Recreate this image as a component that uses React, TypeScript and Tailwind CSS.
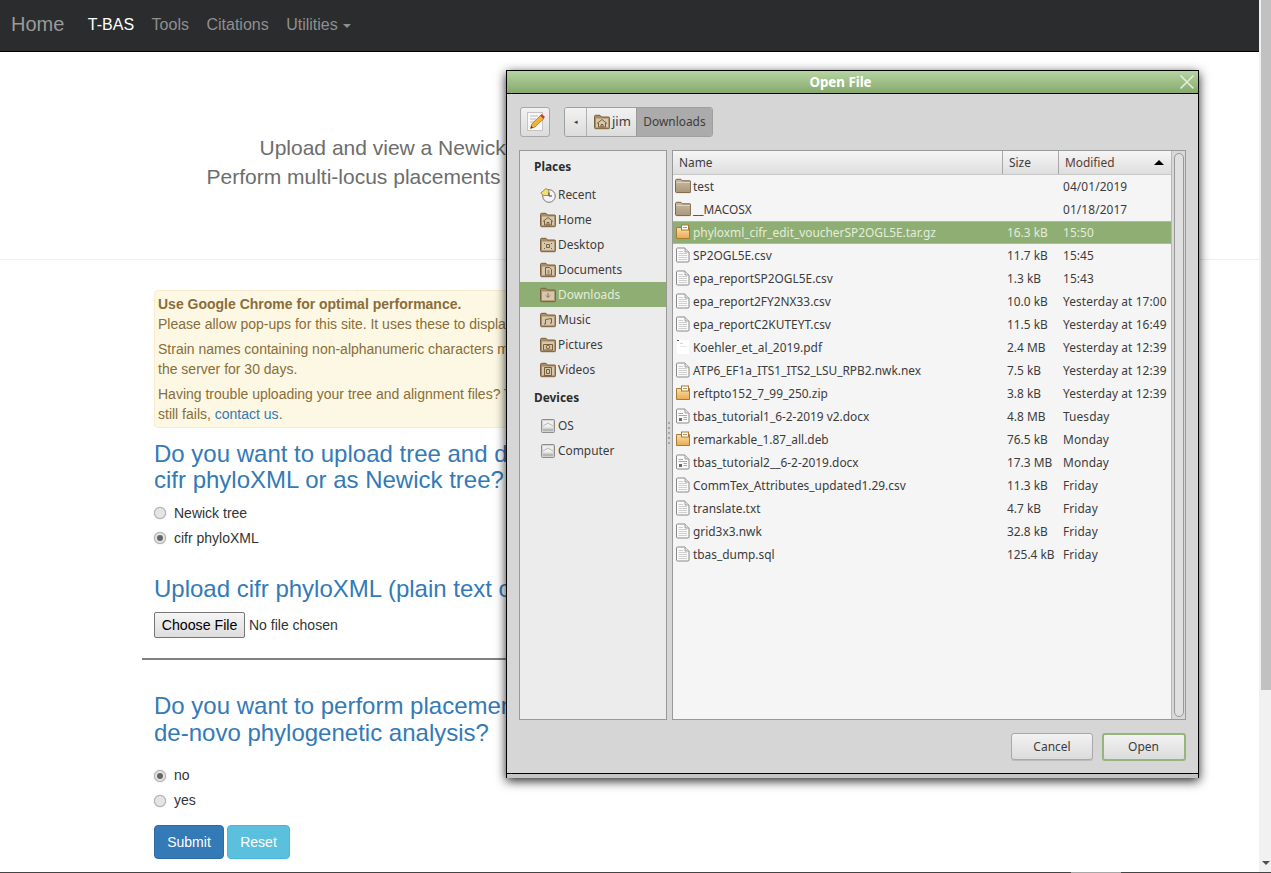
import type { ReactNode } from "react";

type IconKind = "folder" | "text" | "archive" | "doc" | "pdf";

const files: { name: string; size: string; date: string; icon: IconKind }[] = [
  { name: "test", size: "", date: "04/01/2019", icon: "folder" },
  { name: "__MACOSX", size: "", date: "01/18/2017", icon: "folder" },
  { name: "phyloxml_cifr_edit_voucherSP2OGL5E.tar.gz", size: "16.3 kB", date: "15:50", icon: "archive" },
  { name: "SP2OGL5E.csv", size: "11.7 kB", date: "15:45", icon: "text" },
  { name: "epa_reportSP2OGL5E.csv", size: "1.3 kB", date: "15:43", icon: "text" },
  { name: "epa_report2FY2NX33.csv", size: "10.0 kB", date: "Yesterday at 17:00", icon: "text" },
  { name: "epa_reportC2KUTEYT.csv", size: "11.5 kB", date: "Yesterday at 16:49", icon: "text" },
  { name: "Koehler_et_al_2019.pdf", size: "2.4 MB", date: "Yesterday at 12:39", icon: "pdf" },
  { name: "ATP6_EF1a_ITS1_ITS2_LSU_RPB2.nwk.nex", size: "7.5 kB", date: "Yesterday at 12:39", icon: "text" },
  { name: "reftpto152_7_99_250.zip", size: "3.8 kB", date: "Yesterday at 12:39", icon: "archive" },
  { name: "tbas_tutorial1_6-2-2019 v2.docx", size: "4.8 MB", date: "Tuesday", icon: "doc" },
  { name: "remarkable_1.87_all.deb", size: "76.5 kB", date: "Monday", icon: "archive" },
  { name: "tbas_tutorial2__6-2-2019.docx", size: "17.3 MB", date: "Monday", icon: "doc" },
  { name: "CommTex_Attributes_updated1.29.csv", size: "11.3 kB", date: "Friday", icon: "text" },
  { name: "translate.txt", size: "4.7 kB", date: "Friday", icon: "text" },
  { name: "grid3x3.nwk", size: "32.8 kB", date: "Friday", icon: "text" },
  { name: "tbas_dump.sql", size: "125.4 kB", date: "Friday", icon: "text" },
];

const places = ["Home", "Desktop", "Documents", "Downloads", "Music", "Pictures", "Videos"];

function FolderIcon({ glyph }: { glyph?: ReactNode }) {
  return (
    <svg width="16" height="16" viewBox="0 0 16 16" className="shrink-0">
      <path d="M.5 2.5C.5 1.8 1 1.3 1.7 1.3H6L7.5 3H14.5C15.2 3 15.6 3.5 15.6 4.2V13.6C15.6 14.3 15.1 14.7 14.5 14.7H1.6C1 14.7.5 14.3.5 13.6Z" fill="#a98d65" stroke="#7a5f39" />
      <rect x="2" y="4.5" width="12.2" height="8.8" fill="#d6c8b0" />
      {glyph}
    </svg>
  );
}

function FileIcon({ kind }: { kind: IconKind }) {
  if (kind === "folder") {
    return (
      <svg width="16" height="16" viewBox="0 0 16 16" className="shrink-0">
        <defs>
          <linearGradient id="fold" x1="0" y1="0" x2="0" y2="1">
            <stop offset="0" stopColor="#c9baa1" />
            <stop offset="1" stopColor="#a9977a" />
          </linearGradient>
        </defs>
        <path d="M.5 2.5C.5 1.8 1 1.3 1.7 1.3H6L7.3 2.8H15C15.6 2.8 15.7 3.2 15.7 3.8V13.5C15.7 14.2 15.4 14.6 14.8 14.6H1.5C1 14.6.5 14.2.5 13.5Z" fill="url(#fold)" stroke="#7b6443" />
        <rect x="1.3" y="4" width="13.6" height="1" fill="#ddd3c2" />
      </svg>
    );
  }
  if (kind === "archive") {
    return (
      <svg width="16" height="16" viewBox="0 0 16 16" className="shrink-0">
        <defs>
          <linearGradient id="arc" x1="0" y1="0" x2="0" y2="1">
            <stop offset="0" stopColor="#fbe0ad" />
            <stop offset="1" stopColor="#eaa94d" />
          </linearGradient>
        </defs>
        <path d="M1.5 3.5H14.5V14.5H1.5Z" fill="url(#arc)" stroke="#a87a32" />
        <rect x="6.5" y="1" width="7" height="5" fill="#fff" stroke="#a87a32" />
        <rect x="8" y="3" width="4" height="1" fill="#b89a68" />
      </svg>
    );
  }
  if (kind === "pdf") {
    return (
      <svg width="16" height="16" viewBox="0 0 16 16" className="shrink-0">
        <rect x="2" y="1" width="12" height="14" fill="#ffffff" />
        <rect x="2" y="1" width="2" height="1" fill="#555555" />
        <rect x="5" y="4" width="3" height="1" fill="#d5d5d5" />
        <rect x="5" y="7" width="7" height="1" fill="#e8e8e8" />
      </svg>
    );
  }
  return (
    <svg width="16" height="16" viewBox="0 0 16 16" className="shrink-0">
      <path d="M2.5 1C2 1 1.5 1.3 1.5 1.8V14.2C1.5 14.7 2 15 2.5 15H13C13.6 15 14 14.7 14 14.2V5L10 1Z" fill="#fafafa" stroke="#8a8a8a" />
      <path d="M10 1V5H14" fill="#e3e3e3" stroke="#a0a0a0" />
      {kind === "text" ? (
        <path d="M3.5 6.5H12M3.5 8.5H12M3.5 10.5H12M3.5 12.5H12M3.5 4.5H8" stroke="#cfcfcf" />
      ) : (
        <>
          <path d="M3.5 5.5H8M3.5 7.5H12M8.5 9.5H12M8.5 11.5H12" stroke="#a8a8a8" />
          <rect x="4" y="10" width="3" height="3" fill="#6a6a6a" />
        </>
      )}
    </svg>
  );
}

function PlaceGlyph({ name }: { name: string }) {
  switch (name) {
    case "Home":
      return <path d="M3 9.5L8 5.5L13 9.5M4.5 9V13H11.5V9M7 13V10.5H9V13" fill="none" stroke="#7a5f39" />;
    case "Desktop":
      return <path d="M4 6.5H5M11 6.5H12M4 11.5H5M11 11.5H12M6.5 7.5H9.5V10.5H6.5Z" fill="none" stroke="#7a5f39" />;
    case "Documents":
      return <path d="M5.5 5.5H9.5L11.5 7.5V13H5.5ZM7.5 9H9.5M7.5 11H9.5" fill="none" stroke="#7a5f39" />;
    case "Downloads":
      return <path d="M8 6V10M6 8.5L8 10.5L10 8.5" fill="none" stroke="#8c6f45" />;
    case "Music":
      return <path d="M5.5 12V7.5L11.5 6.5V11M4 12H5.5M10 11.2H11.5" fill="none" stroke="#7a5f39" />;
    case "Pictures":
      return (
        <>
          <path d="M3.5 7.5H12.5V13H3.5Z" fill="none" stroke="#7a5f39" />
          <circle cx="8" cy="10" r="1.8" fill="none" stroke="#7a5f39" />
        </>
      );
    case "Videos":
      return <path d="M4.5 5.5H11.5V13.5H4.5ZM6.5 7.5H9.5V11.5H6.5Z" fill="none" stroke="#7a5f39" />;
    default:
      return null;
  }
}

function DriveIcon() {
  return (
    <svg width="16" height="16" viewBox="0 0 16 16" className="shrink-0">
      <rect x="1.5" y="1.5" width="13" height="13" rx="1" fill="#d2d2d2" stroke="#8d8d8d" />
      <rect x="3" y="3" width="10" height="6.5" fill="#efefef" />
      <path d="M3 8L8 5L13 8" fill="none" stroke="#b8b8b8" />
      <rect x="3" y="11" width="10" height="2" fill="#b5b5b5" />
    </svg>
  );
}

function RecentIcon() {
  return (
    <svg width="16" height="16" viewBox="0 0 16 16" className="shrink-0">
      <circle cx="9" cy="9" r="6.3" fill="#f4f4f4" stroke="#777777" />
      <path d="M.8 6L6 1.5L8.8 3.5V8.5H3.5Z" fill="#f3df7a" stroke="#8c7a2e" strokeWidth="0.8" />
      <path d="M9 5.5V9H12" fill="none" stroke="#444444" />
    </svg>
  );
}

function PencilIcon() {
  return (
    <svg width="22" height="22" viewBox="0 0 22 22" className="-ml-[2px]">
      <rect x="4.5" y="1.5" width="15" height="18" fill="#f8f8f8" stroke="#c4c4c4" />
      <path d="M7 5H15M7 8H13M7 11H11" stroke="#bcbcbc" />
      <path d="M7.5 17.5L8.8 13L17.5 4.5L21 7.5L12 16Z" fill="#efb23d" stroke="#9a6a1f" strokeWidth="0.7" />
      <path d="M17 4.8L18.8 3L22 6L20.5 7.8Z" fill="#d23a2a" />
      <path d="M7.5 17.5L8.3 15L10 16.5Z" fill="#333333" />
    </svg>
  );
}

function Radio({ checked }: { checked?: boolean }) {
  return (
    <span className="flex h-[12px] w-[12px] items-center justify-center rounded-full border border-[#b5b5b5] bg-[#e4e4e4] shadow-[0_0_1px_#999]">
      {checked && <span className="h-[6px] w-[6px] rounded-full bg-[#666666]" />}
    </span>
  );
}

function RadioRow({ label, checked }: { label: string; checked?: boolean }) {
  return (
    <div className="flex h-[25px] items-center gap-[8px] pl-[154px] text-[14px] text-[#333333]">
      <Radio checked={checked} />
      <span>{label}</span>
    </div>
  );
}

function Heading({ children }: { children: ReactNode }) {
  return <h3 className="pl-[154px] text-[24px] leading-[26.4px] text-[#337ab7]">{children}</h3>;
}

function OpenFileDialog() {
  return (
    <div
      className="absolute left-[506px] top-[70px] flex h-[708px] w-[693px] flex-col border border-b-0 border-black bg-[#d6d6d6] text-[11.9px] text-[#3c3c3c] shadow-[0_3px_10px_rgba(0,0,0,0.85)]"
      style={{ fontFamily: '"Noto Sans", sans-serif' }}
    >
      <div className="relative flex h-[23px] shrink-0 items-center justify-center border-b border-black bg-gradient-to-b from-[#b6d4a2] to-[#87a96c] pr-[24px] pt-[1px] text-[13.3px] font-bold text-white">
        Open File
        <svg width="16" height="16" viewBox="0 0 16 16" className="absolute right-[3px] top-[3px]">
          <path d="M1.5 1.5L14.5 14.5M14.5 1.5L1.5 14.5" stroke="#e3eedc" strokeWidth="1.6" />
        </svg>
      </div>

      <div className="flex h-[56px] shrink-0 items-start gap-[14px] pl-[13px] pt-[13px]">
        <button className="flex h-[30px] w-[30px] items-center justify-center rounded-[3px] border border-[#a8a8a8] bg-gradient-to-b from-[#f2f2f2] to-[#dcdcdc]">
          <PencilIcon />
        </button>
        <div className="flex h-[30px] overflow-hidden rounded-[3px] border border-[#a0a0a0]">
          <div className="flex w-[22px] items-center justify-center border-r border-[#b0b0b0] bg-gradient-to-b from-[#f2f2f2] to-[#dcdcdc] text-[7px]">
            ◂
          </div>
          <div className="flex w-[49px] items-center gap-[2px] bg-gradient-to-b from-[#f2f2f2] to-[#dcdcdc] pl-[7px] text-[13px]">
            <FolderIcon glyph={<PlaceGlyph name="Home" />} />
            jim
          </div>
          <div className="flex w-[76px] items-center justify-center border-l border-[#9a9a9a] bg-[#ababab]">Downloads</div>
        </div>
      </div>

      <div className="flex h-[570px] shrink-0 pl-[12px]">
        <div className="w-[148px] border border-[#999999] bg-[#ececec]">
          <div className="flex h-[31px] items-center pl-[14px] font-bold text-[#2d2d2d]">Places</div>
          <div className="flex h-[25px] items-center gap-[2px] pl-[20px]">
            <RecentIcon />
            <span>Recent</span>
          </div>
          {places.map((p) => (
            <div
              key={p}
              className={
                p === "Downloads"
                  ? "flex h-[25px] items-center gap-[2px] bg-[#8fae74] pl-[20px] text-[#e4edda]"
                  : "flex h-[25px] items-center gap-[2px] pl-[20px]"
              }
            >
              <FolderIcon glyph={<PlaceGlyph name={p} />} />
              <span>{p}</span>
            </div>
          ))}
          <div className="flex h-[31px] items-center pl-[14px] pt-[1px] font-bold text-[#2d2d2d]">Devices</div>
          {["OS", "Computer"].map((d) => (
            <div key={d} className="flex h-[25px] items-center gap-[2px] pl-[20px]">
              <DriveIcon />
              <span>{d}</span>
            </div>
          ))}
        </div>

        <div className="relative w-[5px]">
          <div className="absolute left-[1px] top-[272px] flex flex-col gap-[3px]">
            {[0, 1, 2, 3, 4].map((i) => (
              <span key={i} className="h-[2px] w-[2px] bg-[#a5a5a5]" />
            ))}
          </div>
        </div>

        <div className="flex w-[514px] border border-[#999999] bg-[#f5f5f5]">
          <div className="w-[498px]">
            <div className="flex h-[24px] border-b border-[#c8c8c8] bg-gradient-to-b from-[#f6f6f6] to-[#dedede]">
              <div className="w-[330px] border-r border-[#a8a8a8] pl-[6px] leading-[23px]">Name</div>
              <div className="w-[56px] border-r border-[#a8a8a8] pl-[6px] leading-[23px]">Size</div>
              <div className="flex flex-1 items-center justify-between pl-[6px] pr-[7px] text-[#5a3a30]">
                Modified
                <span className="h-0 w-0 border-x-[5px] border-b-[5px] border-x-transparent border-b-black" />
              </div>
            </div>
            {files.map((f) => (
              <div
                key={f.name}
                className={
                  f.date === "15:50"
                    ? "flex h-[23px] items-center border-y border-[#b4b4b4] bg-[#8fae74] text-[#e4edda]"
                    : "flex h-[23px] items-center"
                }
              >
                <div className="flex w-[330px] items-center gap-[2px] overflow-hidden pl-[2px] whitespace-nowrap">
                  <FileIcon kind={f.icon} />
                  <span>{f.name}</span>
                </div>
                <div className="w-[56px] pl-[4px] whitespace-nowrap">{f.size}</div>
                <div className="flex-1 whitespace-nowrap pl-[4px] tracking-[0.1px]">{f.date}</div>
              </div>
            ))}
          </div>
          <div className="flex flex-1 justify-center border-l border-[#b8b8b8] bg-[#d8d8d8] py-[2px]">
            <div className="w-[10px] rounded-full border border-[#999999] bg-[#e0e0e0]" />
          </div>
        </div>
      </div>

      <div className="flex h-[53px] shrink-0 items-center justify-end gap-[9px] pr-[12px]">
        <button className="h-[27px] w-[82px] rounded-[3px] border border-[#a8a8a8] bg-gradient-to-b from-[#f2f2f2] to-[#dcdcdc] text-[12px] shadow-[0_1px_0_#bbb]">
          Cancel
        </button>
        <button className="h-[28px] w-[84px] rounded-[3px] border-2 border-[#95b57c] bg-gradient-to-b from-[#f2f2f2] to-[#dcdcdc] pr-[1px] text-[12px]">
          Open
        </button>
      </div>

      <div className="h-[5px] border-t border-black bg-[#c4c4c4]" />
    </div>
  );
}

export default function App() {
  return (
    <div
      className="relative flex h-[873px] w-[1271px] overflow-hidden bg-white"
      style={{ fontFamily: '"Liberation Sans", sans-serif' }}
    >
      <div className="w-[1259px] shrink-0">
        <nav className="flex h-[52px] items-center gap-[17.5px] border-b border-black bg-[#2b2c2e] pb-[2px] pl-[11px] text-[16px] text-[#8f8f8f]">
          <span className="mb-[2px] mr-[6px] text-[20px] text-[#9a9a9a]">Home</span>
          <span className="text-white">T-BAS</span>
          <span>Tools</span>
          <span>Citations</span>
          <span className="flex items-center gap-[5px]">
            Utilities
            <span className="mt-[2px] h-0 w-0 border-x-[4px] border-t-[4px] border-x-transparent border-t-[#8f8f8f]" />
          </span>
        </nav>

        <div className="h-[208px] border-b border-[#eeeeee] pt-[81px] text-[21px] leading-[29px] text-[#6d6d6d]">
          <p className="whitespace-nowrap pl-[259.5px]">Upload and view a Newick tree or cifr phyloXML file</p>
          <p className="whitespace-nowrap pl-[206.5px]">Perform multi-locus placements of query sequences</p>
        </div>

        <div className="ml-[154px] mt-[30px] w-[950px] rounded-[4px] border border-[#faebcc] bg-[#fcf8e3] px-[3px] py-[3px] text-[14px] leading-[20px] text-[#8a6d3b]">
          <p>
            <b>Use Google Chrome for optimal performance.</b>
            <br />
            Please allow pop-ups for this site. It uses these to display results.
          </p>
          <p className="mt-[5px]">
            Strain names containing non-alphanumeric characters may be altered. Uploaded files are stored on
            <br />
            the server for 30 days.
          </p>
          <p className="mt-[5px]">
            Having trouble uploading your tree and alignment files? Try again and if it
            <br />
            still fails, <span className="text-[#337ab7]">contact us</span>.
          </p>
        </div>

        <div className="mt-[13px]">
          <Heading>
            Do you want to upload tree and data as
            <br />
            cifr phyloXML or as Newick tree?
          </Heading>
        </div>
        <div className="mt-[7px]">
          <RadioRow label="Newick tree" />
          <RadioRow label="cifr phyloXML" checked />
        </div>

        <div className="mt-[25px]">
          <Heading>Upload cifr phyloXML (plain text or zip)</Heading>
        </div>
        <div className="mt-[10px] flex items-center gap-[4px] pl-[154px] text-[14px] text-[#333333]">
          <button className="h-[26px] w-[91px] rounded-[2px] border border-[#767676] bg-gradient-to-b from-[#f5f5f5] to-[#dddddd] text-[14.2px] text-black">
            Choose File
          </button>
          <span>No file chosen</span>
        </div>

        <div className="ml-[142px] mt-[20px] h-[2px] w-[960px] bg-[#808080]" />

        <div className="mt-[33px]">
          <Heading>
            Do you want to perform placements or
            <br />
            de-novo phylogenetic analysis?
          </Heading>
        </div>
        <div className="mt-[17px]">
          <RadioRow label="no" checked />
          <RadioRow label="yes" />
        </div>

        <div className="mt-[12px] flex gap-[3px] pl-[154px] text-[14px] text-white">
          <button className="h-[34px] w-[70px] rounded-[4px] border border-[#2e6da4] bg-[#337ab7]">Submit</button>
          <button className="h-[34px] w-[63px] rounded-[4px] border border-[#46b8da] bg-[#5bc0de]">Reset</button>
        </div>
      </div>

      <div className="flex w-[12px] shrink-0 flex-col bg-[#f1f1f1]">
        <div className="ml-[2px] h-[690px] bg-[#c1c1c1]" />
        <div className="mb-[8px] ml-[3px] mt-auto h-0 w-0 border-x-[4px] border-t-[4px] border-x-transparent border-t-[#505050]" />
      </div>

      <div className="absolute bottom-0 left-0 h-[1px] w-full bg-[#444444]" />
      <div className="absolute bottom-0 left-[1071px] h-[1px] w-[50px] bg-[#a8a8a8]" />

      <OpenFileDialog />
    </div>
  );
}
